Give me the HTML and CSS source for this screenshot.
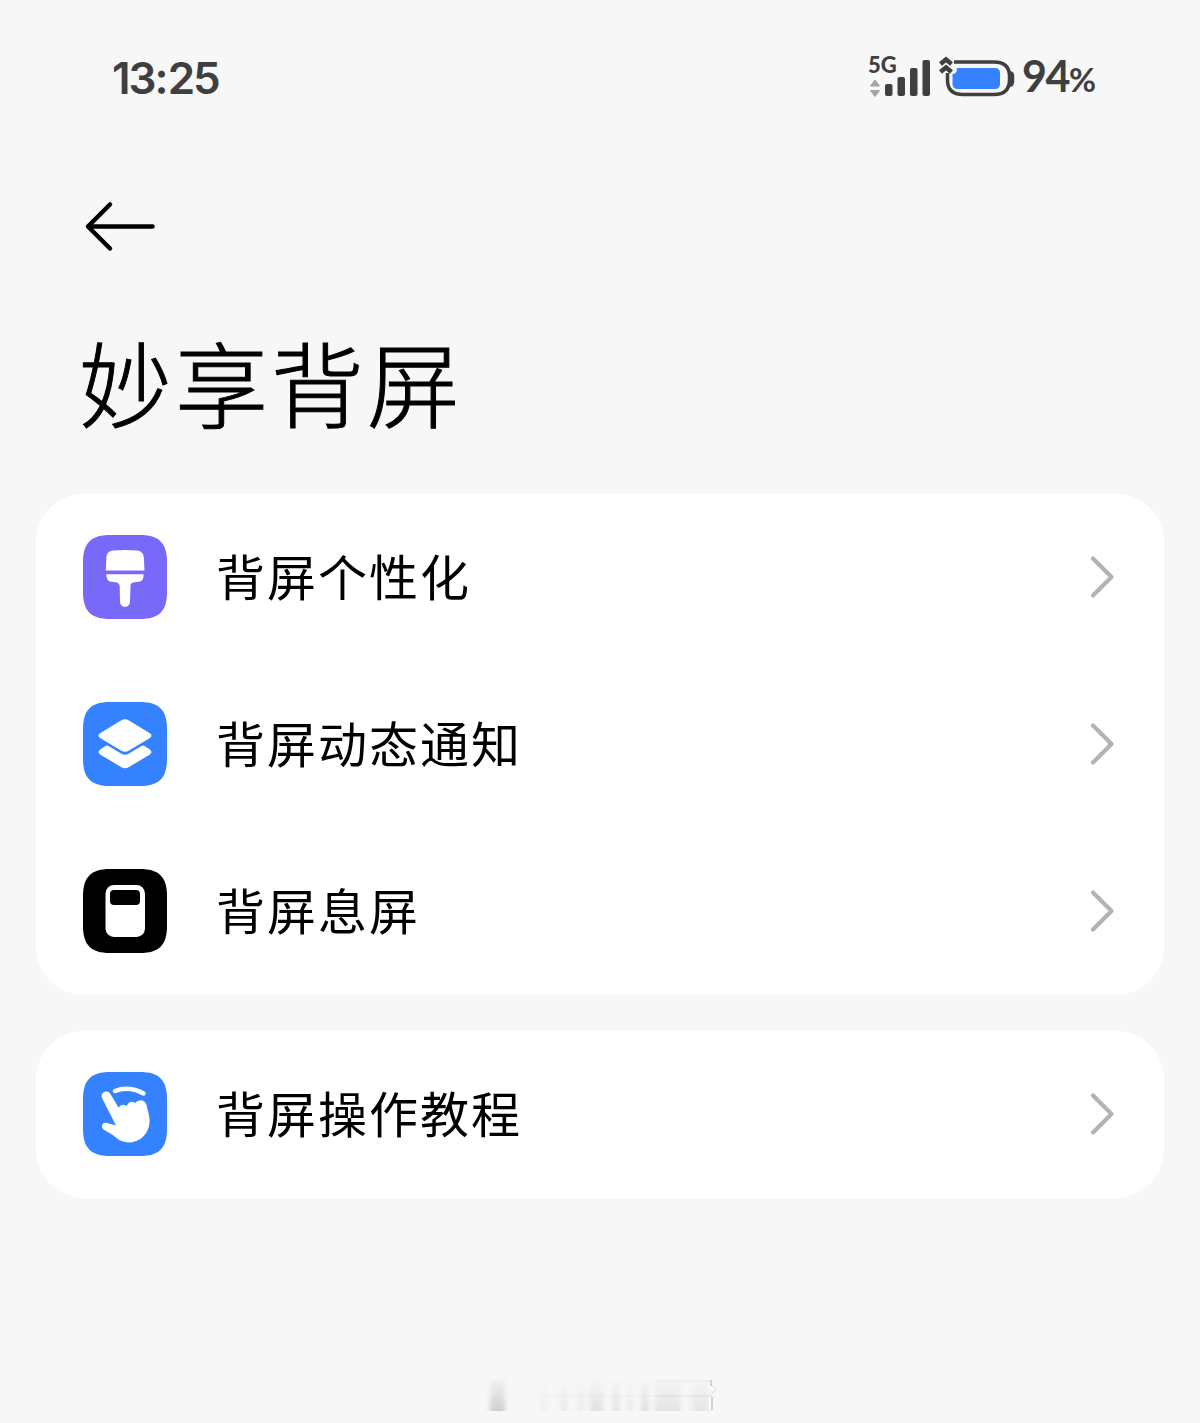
FILE: index.html
```html
<!DOCTYPE html>
<html lang="zh-CN">
<head>
<meta charset="utf-8">
<title>妙享背屏</title>
<link rel="stylesheet" href="styles.css">
</head>
<body>
<div class="screen">
  <header class="status">
    <div class="clock">13<span class="colon">:</span>25</div>
    <div class="indicators">
      <div class="network">
        <span class="gen">5G</span>
        <svg class="signal" width="64" height="44" viewBox="0 0 64 44">
          <path d="M7 24l4.500 6h-9zM7 40.500l4.500-6h-9z" fill="#a5a5a5" stroke="#a5a5a5" stroke-linejoin="round"/>
          <g fill="#3f3f3f"><rect x="17" y="28" width="7.500" height="12" rx="2"/><rect x="29.500" y="21" width="7.500" height="19" rx="2"/><rect x="42" y="12" width="7.500" height="28" rx="2"/><rect x="54.500" y="4" width="7.500" height="36" rx="2"/></g>
        </svg>
      </div>
      <svg class="battery" width="76" height="44" viewBox="0 0 76 44">
        <path d="M15 6H55Q70.500 6 70.500 20.500V23.500Q70.500 38.500 55 38.500H24Q8.500 38.500 8.500 24V17" fill="none" stroke="#3f3f3f" stroke-width="3.500"/>
        <path d="M70 16h2q2.500 1 2.500 4v5q0 4-2.500 5h-2z" fill="#3f3f3f" stroke="#3f3f3f" stroke-width="1.500"/>
        <path d="M18 12H56Q61 12 61 17V28Q61 33 56 33H19Q13.500 33 13.500 28V18Q18 18 18 12z" fill="#3482ff"/>
        <path d="M1.500 8L7 3.500L12.500 8M1.500 16L7 11.500L12.500 16" fill="none" stroke="#3f3f3f" stroke-width="4.500"/>
      </svg>
      <div class="level">94<span class="percent">%</span></div>
    </div>
  </header>
  <nav class="nav">
    <svg width="74" height="56" viewBox="0 0 74 56" fill="none" stroke="#000" stroke-width="4.500" stroke-linecap="round" stroke-linejoin="round"><path d="M69.500 28.500H5M27 6.500L5 28.500L27 50.500"/></svg>
  </nav>
  <h1 class="title">妙享背屏</h1>
  <main class="groups">
    <section class="card">
      <div class="row">
        <svg class="icon" viewBox="0 0 84 84">
          <path class="violet" d="M27 0H57C76 0 84 8 84 27V57C84 76 76 84 57 84H27C8 84 0 76 0 57V27C0 8 8 0 27 0z"/>
          <path fill="#fff" d="M30 15.500Q42 14.500 54 15.500Q60 16 60.800 22L61.500 35.500H22.800L23.400 22Q24 16 30 15.500zM23.500 39.200H60.500V41Q60.500 46 55.500 46.800L50 47.500Q47.500 48 47.500 51L47 66.500C47 73.500 37 73.500 37 66.500L36.700 51Q36.500 48 34 47.500L28.500 46.800Q23.500 46 23.500 41z"/>
        </svg>
        <span class="label">背屏个性化</span>
        <svg class="chevron" viewBox="0 0 26 44"><path d="M4 3.500L22.500 22L4 40.500"/></svg>
      </div>
      <div class="row">
        <svg class="icon" viewBox="0 0 84 84">
          <path class="blue" d="M27 0H57C76 0 84 8 84 27V57C84 76 76 84 57 84H27C8 84 0 76 0 57V27C0 8 8 0 27 0z"/>
          <path fill="#fff" d="M38 18.500Q42 16 46 18.500L66.500 31Q70.500 33.700 66.500 36.300L46 48.500Q42 51 38 48.500L17.500 36.300Q13.500 33.700 17.500 31zM22.500 44Q24 43.200 25.500 44L38 51.500Q42 54 46 51.500L58.500 44Q60 43.200 61.500 44L66.500 47.200Q70.500 50 66.500 52.700L46 65Q42 67.500 38 65L17.500 52.700Q13.500 50 17.500 47.200z"/>
        </svg>
        <span class="label">背屏动态通知</span>
        <svg class="chevron" viewBox="0 0 26 44"><path d="M4 3.500L22.500 22L4 40.500"/></svg>
      </div>
      <div class="row">
        <svg class="icon" viewBox="0 0 84 84">
          <path d="M27 0H57C76 0 84 8 84 27V57C84 76 76 84 57 84H27C8 84 0 76 0 57V27C0 8 8 0 27 0z"/>
          <rect x="22.500" y="16" width="39.500" height="52" rx="8.500" fill="#fff"/><rect x="27" y="21" width="30" height="15" rx="4"/>
        </svg>
        <span class="label">背屏息屏</span>
        <svg class="chevron" viewBox="0 0 26 44"><path d="M4 3.500L22.500 22L4 40.500"/></svg>
      </div>
    </section>
    <section class="card">
      <div class="row">
        <svg class="icon" viewBox="0 0 84 84">
          <path class="blue" d="M27 0H57C76 0 84 8 84 27V57C84 76 76 84 57 84H27C8 84 0 76 0 57V27C0 8 8 0 27 0z"/>
          <path d="M32 19Q46 13.500 60.500 21.500" fill="none" stroke="#fff" stroke-width="4.500" stroke-linecap="round"/>
          <path fill="#fff" d="M19 26C17 20 24.500 17 27.500 22L35.500 35.500Q39 31 43.500 34Q47 27.500 52 31C57 26 62 28.500 63.500 33L65.500 41C70 57 60 69.500 47 70.500C38 70.500 34 66.500 30.500 63.500L20.500 57.500C17 54 20 49.500 25 51.200L33 53.500z"/>
        </svg>
        <span class="label">背屏操作教程</span>
        <svg class="chevron" viewBox="0 0 26 44"><path d="M4 3.500L22.500 22L4 40.500"/></svg>
      </div>
    </section>
  </main>
  <footer class="residue">
    <svg width="250" height="50" viewBox="0 0 250 50">
      <defs>
        <linearGradient id="fade" x1="0" y1="0" x2="0" y2="1"><stop offset="0" stop-color="#888" stop-opacity=".05"/><stop offset=".6" stop-color="#888" stop-opacity=".55"/><stop offset="1" stop-color="#888" stop-opacity=".85"/></linearGradient>
        <filter id="soft" x="-10%" y="-10%" width="120%" height="120%"><feGaussianBlur stdDeviation="2.500 .5"/></filter>
      </defs>
      <g fill="url(#fade)" filter="url(#soft)">
        <rect x="10" y="8" width="15" height="33" opacity=".42"/>
        <rect x="60" y="9" width="6" height="32" opacity=".1"/><rect x="81" y="9" width="6" height="32" opacity=".17"/><rect x="98" y="9" width="6" height="32" opacity=".15"/><rect x="110" y="9" width="13" height="32" opacity=".23"/><rect x="133" y="9" width="6" height="32" opacity=".25"/><rect x="147" y="9" width="6" height="32" opacity=".14"/><rect x="162" y="9" width="6" height="32" opacity=".3"/><rect x="175" y="9" width="26" height="32" opacity=".2"/><rect x="211" y="9" width="18" height="32" opacity=".18"/>
      </g>
      <g fill="none" stroke="#999"><path d="M175 11H232" opacity=".12"/><path d="M60 26H175" opacity=".08"/><path d="M175 26H232" opacity=".25"/><path d="M231 10V16M232 27V40" opacity=".5" stroke-width="1.500"/></g>
      <path d="M229 27h2v12h-2zM230 17h6v2h-6zM232 15h2v6h-2z" fill="#fff"/><path d="M231 15l5 4l-4 4" fill="none" stroke="#aaa" opacity=".5"/>
    </svg>
  </footer>
</div>
</body>
</html>
```
FILE: styles.css
```css
* { box-sizing: border-box; }
body { margin: 0; background: #f7f7f7; color: #000; font-family: "Noto Sans CJK SC", sans-serif; }
.screen { width: 1200px; height: 1423px; display: flex; flex-direction: column; overflow: hidden; }
.status { height: 155px; padding: 0 106px 0 112px; display: flex; align-items: center; justify-content: space-between; color: #3f3f3f; font-family: Lato, sans-serif; font-weight: 700; }
.clock { font-family: Inter, sans-serif; font-weight: 600; font-size: 44px; line-height: 60px; letter-spacing: -2px; }
.colon { letter-spacing: -1px; }
.indicators { display: flex; align-items: center; }
.network { position: relative; width: 64px; height: 44px; margin-right: 7px; }
.gen { position: absolute; left: 0; top: -3px; font: 900 22px/24px Lato, sans-serif; }
.signal, .battery, .chevron, .icon { display: block; flex: none; }
.level { width: 79px; padding-left: 7px; font-size: 43px; line-height: 60px; letter-spacing: -1.500px; white-space: nowrap; }
.percent { font-size: 33px; }
.nav { height: 145px; padding: 43px 83px 0; }
.title { margin: 0; height: 194px; padding: 14px 0 0 79px; font-size: 93px; line-height: 134px; font-weight: 300; letter-spacing: 3px; -webkit-text-stroke: 1px #000; }
.groups { display: flex; flex-direction: column; gap: 36px; padding: 0 36px; }
.card { background: #fff; border-radius: 48px; }
.row { height: 167px; padding: 0 49px 2px 47px; display: flex; align-items: center; }
.icon { width: 84px; height: 84px; }
.violet { fill: #7869f8; }
.blue { fill: #3482ff; }
.label { flex: 1; margin-left: 49px; padding-bottom: 4px; font-size: 49px; line-height: 72px; letter-spacing: 2px; font-weight: 400; }
.chevron { width: 26px; height: 44px; fill: none; stroke: #b3b3b3; stroke-width: 4.2px; stroke-linecap: round; stroke-linejoin: round; }
.residue { margin-top: auto; height: 53px; padding-left: 480px; }
```
